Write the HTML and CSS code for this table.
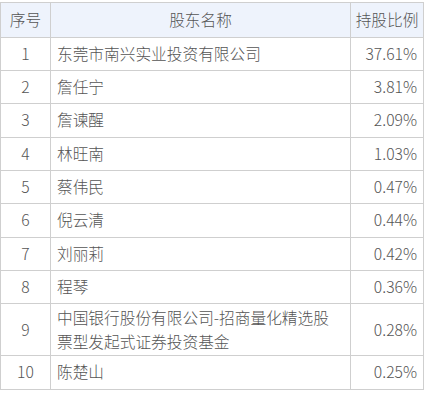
FILE: index.html
```html
<!DOCTYPE html>
<html lang="zh-CN">
<head>
<meta charset="utf-8">
<link rel="stylesheet" href="styles.css">
</head>
<body>
<table class="holders">
  <colgroup>
    <col class="c-idx">
    <col class="c-name">
    <col class="c-pct">
  </colgroup>
  <thead>
    <tr><th>序号</th><th>股东名称</th><th>持股比例</th></tr>
  </thead>
  <tbody>
    <tr><td class="idx">1</td><td class="name">东莞市南兴实业投资有限公司</td><td class="pct">37.61%</td></tr>
    <tr><td class="idx">2</td><td class="name">詹任宁</td><td class="pct">3.81%</td></tr>
    <tr><td class="idx">3</td><td class="name">詹谏醒</td><td class="pct">2.09%</td></tr>
    <tr><td class="idx">4</td><td class="name">林旺南</td><td class="pct">1.03%</td></tr>
    <tr><td class="idx">5</td><td class="name">蔡伟民</td><td class="pct">0.47%</td></tr>
    <tr><td class="idx">6</td><td class="name">倪云清</td><td class="pct">0.44%</td></tr>
    <tr><td class="idx">7</td><td class="name">刘丽莉</td><td class="pct">0.42%</td></tr>
    <tr><td class="idx">8</td><td class="name">程琴</td><td class="pct">0.36%</td></tr>
    <tr><td class="idx">9</td><td class="name">中国银行股份有限公司-招商量化精选股票型发起式证券投资基金</td><td class="pct">0.28%</td></tr>
    <tr><td class="idx">10</td><td class="name">陈楚山</td><td class="pct">0.25%</td></tr>
  </tbody>
</table>
</body>
</html>
```
FILE: styles.css
```css
html, body {
  margin: 0;
  padding: 0;
  background: #fff;
}
body {
  padding-top: 2px;
  font-family: "Noto Sans CJK SC", "Noto Sans", sans-serif;
  font-weight: 300;
  font-size: 15.7px;
  color: #555;
}
.holders {
  width: 424px;
  border-collapse: collapse;
  table-layout: fixed;
}
.c-idx { width: 50px; }
.c-pct { width: 73px; }
.holders th,
.holders td {
  border: 1px solid #cfcfcf;
  line-height: 24px;
  padding: 1.5px 6px;
  vertical-align: middle;
}
.holders th {
  background: #eef3fc;
  font-weight: 300;
  text-align: center;
  white-space: nowrap;
  padding-left: 2px;
  padding-right: 2px;
  height: 30.67px;
}
.holders td {
  height: 29.33px;
}
.idx { text-align: center; }
.name { text-align: left; padding-left: 6px; }
.pct { text-align: right; }
```
